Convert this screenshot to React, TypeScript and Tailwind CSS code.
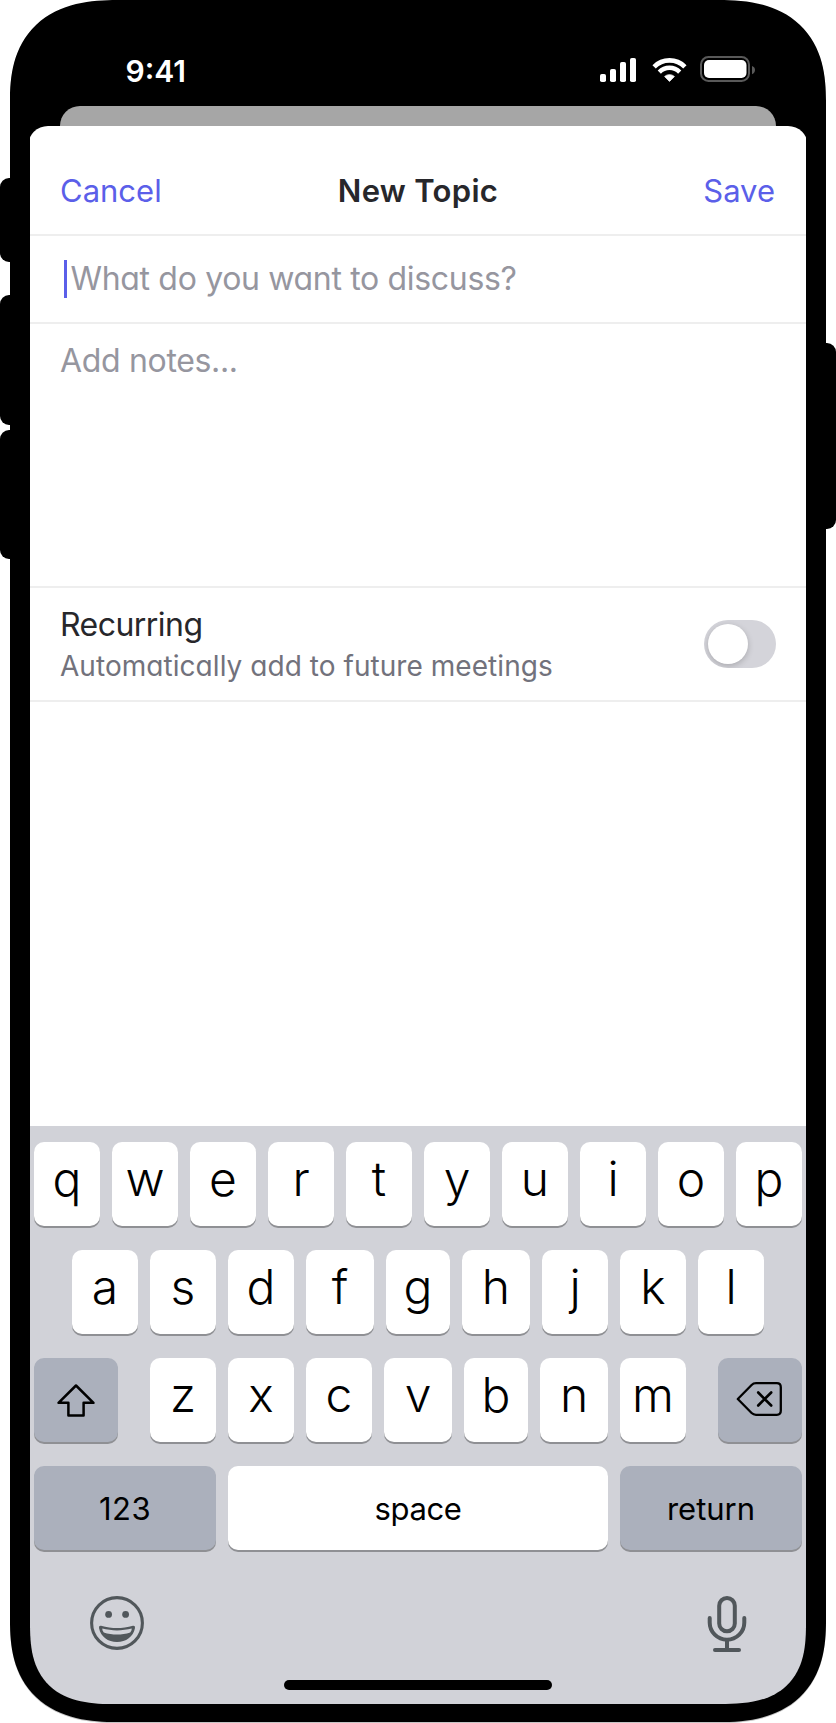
import type { ReactNode } from "react";

type KeySpec = { label: string; width: string };

const W64 = "w-[64px]";
const W66 = "w-[66px]";
const W68 = "w-[68px]";

const topRow: KeySpec[] = [..."qwertyuiop"].map((label) => ({ label, width: W66 }));

const homeRow: KeySpec[] = [
  { label: "a", width: W66 },
  { label: "s", width: W66 },
  { label: "d", width: W66 },
  { label: "f", width: W68 },
  { label: "g", width: W64 },
  { label: "h", width: W68 },
  { label: "j", width: W66 },
  { label: "k", width: W66 },
  { label: "l", width: W66 },
];

const bottomRow: KeySpec[] = [
  { label: "z", width: W66 },
  { label: "x", width: W66 },
  { label: "c", width: W66 },
  { label: "v", width: W68 },
  { label: "b", width: W64 },
  { label: "n", width: W68 },
  { label: "m", width: W66 },
];

function LetterKeys({ keys }: { keys: KeySpec[] }) {
  return (
    <div className="flex gap-3">
      {keys.map(({ label, width }) => (
        <button
          key={label}
          className={`${width} flex h-[84px] justify-center rounded-[10px] bg-white text-[48px] leading-[73px] font-light text-black shadow-[0_2px_0_#8f9094]`}
        >
          {label}
        </button>
      ))}
    </div>
  );
}

function ActionKey({ className, children }: { className: string; children: ReactNode }) {
  return (
    <button
      className={`${className} flex h-[84px] justify-center rounded-[10px] text-[31px] leading-[86px] text-black shadow-[0_2px_0_#8f9094]`}
    >
      {children}
    </button>
  );
}

function SignalIcon() {
  return (
    <svg width="36" height="24" viewBox="0 0 36 24" fill="#fff">
      <rect x="0" y="16" width="6" height="8" rx="1.8" />
      <rect x="10" y="11" width="6" height="13" rx="1.8" />
      <rect x="20" y="4" width="6" height="20" rx="1.8" />
      <rect x="30" y="0" width="6" height="24" rx="1.8" />
    </svg>
  );
}

function WifiIcon() {
  return (
    <svg width="35" height="24" viewBox="0 0 35 24" fill="none" stroke="#fff">
      <path d="M2.1 8.8A21.8 21.8 0 0 1 32.9 8.8" strokeWidth="4.7" />
      <path d="M7.3 14.1A14.3 14.3 0 0 1 27.7 14.1" strokeWidth="4.5" />
      <path d="M17.5 23.4 12.6 18.5A7.4 7.4 0 0 1 22.4 18.5Z" fill="#fff" strokeWidth="0.8" strokeLinejoin="round" />
    </svg>
  );
}

function BatteryIcon() {
  return (
    <svg width="55" height="26" viewBox="0 0 55 26">
      <rect x="1" y="1" width="48" height="24" rx="7.5" fill="none" stroke="#595959" strokeWidth="2" />
      <rect x="4" y="4" width="42.5" height="18" rx="5" fill="#fff" />
      <path d="M52 10c2 .8 3 2.2 3 4s-1 3.4-3 4.2z" fill="#595959" />
    </svg>
  );
}

function ShiftIcon() {
  return (
    <svg width="84" height="84" viewBox="0 0 84 84" fill="none" stroke="#000" strokeWidth="2.5" strokeLinejoin="round">
      <path d="M42 27.5 59.5 44.8H49.6V57.5H34.4V44.8H24.5Z" />
    </svg>
  );
}

function DeleteIcon() {
  return (
    <svg width="84" height="84" viewBox="0 0 84 84" fill="none" stroke="#000" strokeWidth="2.3" strokeLinejoin="round" strokeLinecap="round">
      <path d="M19.8 41 33.6 27Q35.4 25.2 38 25.2H58.8Q62.8 25.2 62.8 29.2V52.8Q62.8 56.8 58.8 56.8H38Q35.4 56.8 33.6 55Z" />
      <path d="m40.2 34.5 13 13m0-13-13 13" strokeWidth="2.6" />
    </svg>
  );
}

function EmojiIcon() {
  return (
    <svg width="54" height="54" viewBox="-27 -27 54 54" fill="#51575b">
      <circle r="25.4" fill="none" stroke="#51575b" strokeWidth="3.1" />
      <circle cx="-8.4" cy="-8.6" r="3.4" />
      <circle cx="8.6" cy="-8.6" r="3.4" />
      <path
        fillRule="evenodd"
        d="M-16 2.7C-10.5 4.400-5 5 0 5S10.5 4.4 16 2.7Q18.400 2.4 18 5C16.200 13.8 9 19 0 19S-16.200 13.8-18 5Q-18.400 2.4-16 2.7ZM-14.700 5.6C-14.700 7.3-14.200 8.6-13.200 9.4C-9 10.8-4.500 11.5 0 11.5S9 10.8 13.2 9.4C14.200 8.6 14.7 7.3 14.7 5.6C10 6.8 5 7.4 0 7.4S-10 6.8-14.700 5.6Z"
      />
    </svg>
  );
}

function MicIcon() {
  return (
    <svg width="40" height="56" viewBox="0 0 40 56" fill="none" stroke="#51575b" strokeWidth="4" strokeLinecap="round">
      <rect x="12.200" y="2" width="15.600" height="33.300" rx="7.800" />
      <path d="M2.7 22V26.4A17.3 17.3 0 0 0 37.3 26.4V22" />
      <path d="M20 44V54" />
      <path d="M8 54H32" />
    </svg>
  );
}

export default function App() {
  return (
    <div className="relative flex h-[1723px] w-[836px] flex-col bg-white px-[10px] font-['Inter','Liberation_Sans',sans-serif]">
      <div className="absolute top-[178px] left-0 h-[84px] w-[20px] rounded-l-[9px] bg-black" />
      <div className="absolute top-[295px] left-0 h-[130px] w-[20px] rounded-l-[9px] bg-black" />
      <div className="absolute top-[430px] left-0 h-[129px] w-[20px] rounded-l-[9px] bg-black" />
      <div className="absolute top-[343px] right-0 h-[186px] w-[20px] rounded-r-[9px] bg-black" />

      <div className="relative flex h-[1722px] flex-col rounded-[107px/101px] bg-black px-5 pb-[18px] shadow-[0_1px_0_#c4c4c4] [corner-shape:superellipse(1.3)]">
        <div className="flex h-[106px] shrink-0 justify-between pr-[51px] pl-[95.5px]">
          <span className="pt-[51px] text-[30px] leading-[40px] font-semibold text-white">9:41</span>
          <div className="flex items-start gap-[13px] pt-[56px]">
            <div className="flex gap-4 pt-[2px]">
              <SignalIcon />
              <WifiIcon />
            </div>
            <BatteryIcon />
          </div>
        </div>

        <div className="flex min-h-0 flex-1 flex-col overflow-hidden [border-bottom-left-radius:86px_81px] [border-bottom-right-radius:86px_81px] [corner-shape:round_round_superellipse(1.43)_superellipse(1.43)]">
          <div className="mx-[30px] h-5 shrink-0 rounded-t-[20px] bg-[#a6a6a6]" />
          <div className="-mx-[2px] flex flex-1 flex-col rounded-t-[20px] bg-white px-[2px]">
            <header className="grid h-[110px] grid-cols-[1fr_auto_1fr] items-center border-b-2 border-[#eeeeee] pt-[23px] pr-[31px] pl-[30px] text-[31px]">
              <button className="justify-self-start text-[#5b5fe9]">Cancel</button>
              <h1 className="pl-px font-semibold tracking-[0.3px] text-[#27272b]">New Topic</h1>
              <button className="justify-self-end text-[#5b5fe9]">Save</button>
            </header>

            <div className="flex h-[88px] items-center gap-[4px] border-b-2 border-[#eeeeee] pb-px pl-[34px]">
              <span className="h-[38px] w-[2.5px] bg-[#5b5fe9]" />
              <span className="text-[32px] tracking-[-0.33px] text-[#96969f] [font-feature-settings:'cv11']">
                What do you want to discuss?
              </span>
            </div>

            <div className="h-[264px] border-b-2 border-[#eeeeee] pt-5 pl-[30px] text-[32px] leading-[33px] tracking-[-0.33px] text-[#96969f]">
              Add notes...
            </div>

            <div className="flex h-[114px] items-center justify-between border-b-2 border-[#eeeeee] px-[30px]">
              <div className="flex h-full flex-col pt-[21px] [font-feature-settings:'cv11']">
                <span className="text-[32px] leading-[32px] tracking-[-0.54px] text-[#27272b]">Recurring</span>
                <span className="text-[28px] leading-[50px] tracking-[0.05px] text-[#72727c]">
                  Automatically add to future meetings
                </span>
              </div>
              <button
                role="switch"
                aria-checked="false"
                className="flex h-12 w-[72px] items-center overflow-hidden rounded-full bg-[#d4d4da] pl-1"
              >
                <span className="size-10 rounded-full bg-white shadow-[0_2px_6px_rgba(0,0,0,0.2)]" />
              </button>
            </div>
          </div>

          <div className="flex h-[578px] shrink-0 flex-col items-center gap-6 bg-[#d1d2d8] pt-4">
            <LetterKeys keys={topRow} />
            <LetterKeys keys={homeRow} />
            <div className="flex gap-8">
              <ActionKey className="w-[84px] bg-[#abb0bc]">
                <ShiftIcon />
              </ActionKey>
              <LetterKeys keys={bottomRow} />
              <ActionKey className="w-[84px] bg-[#abb0bc]">
                <DeleteIcon />
              </ActionKey>
            </div>
            <div className="flex gap-3">
              <ActionKey className="w-[182px] bg-[#abb0bc] tracking-[0.5px]">123</ActionKey>
              <ActionKey className="w-[380px] bg-white tracking-[-0.4px]">space</ActionKey>
              <ActionKey className="w-[182px] bg-[#abb0bc]">return</ActionKey>
            </div>
            <div className="flex w-full justify-between pt-[22px] pr-[59px] pl-[60px]">
              <EmojiIcon />
              <MicIcon />
            </div>
            <div className="mt-[4px] h-[10px] w-[268px] rounded-full bg-black" />
          </div>
        </div>
      </div>
    </div>
  );
}
